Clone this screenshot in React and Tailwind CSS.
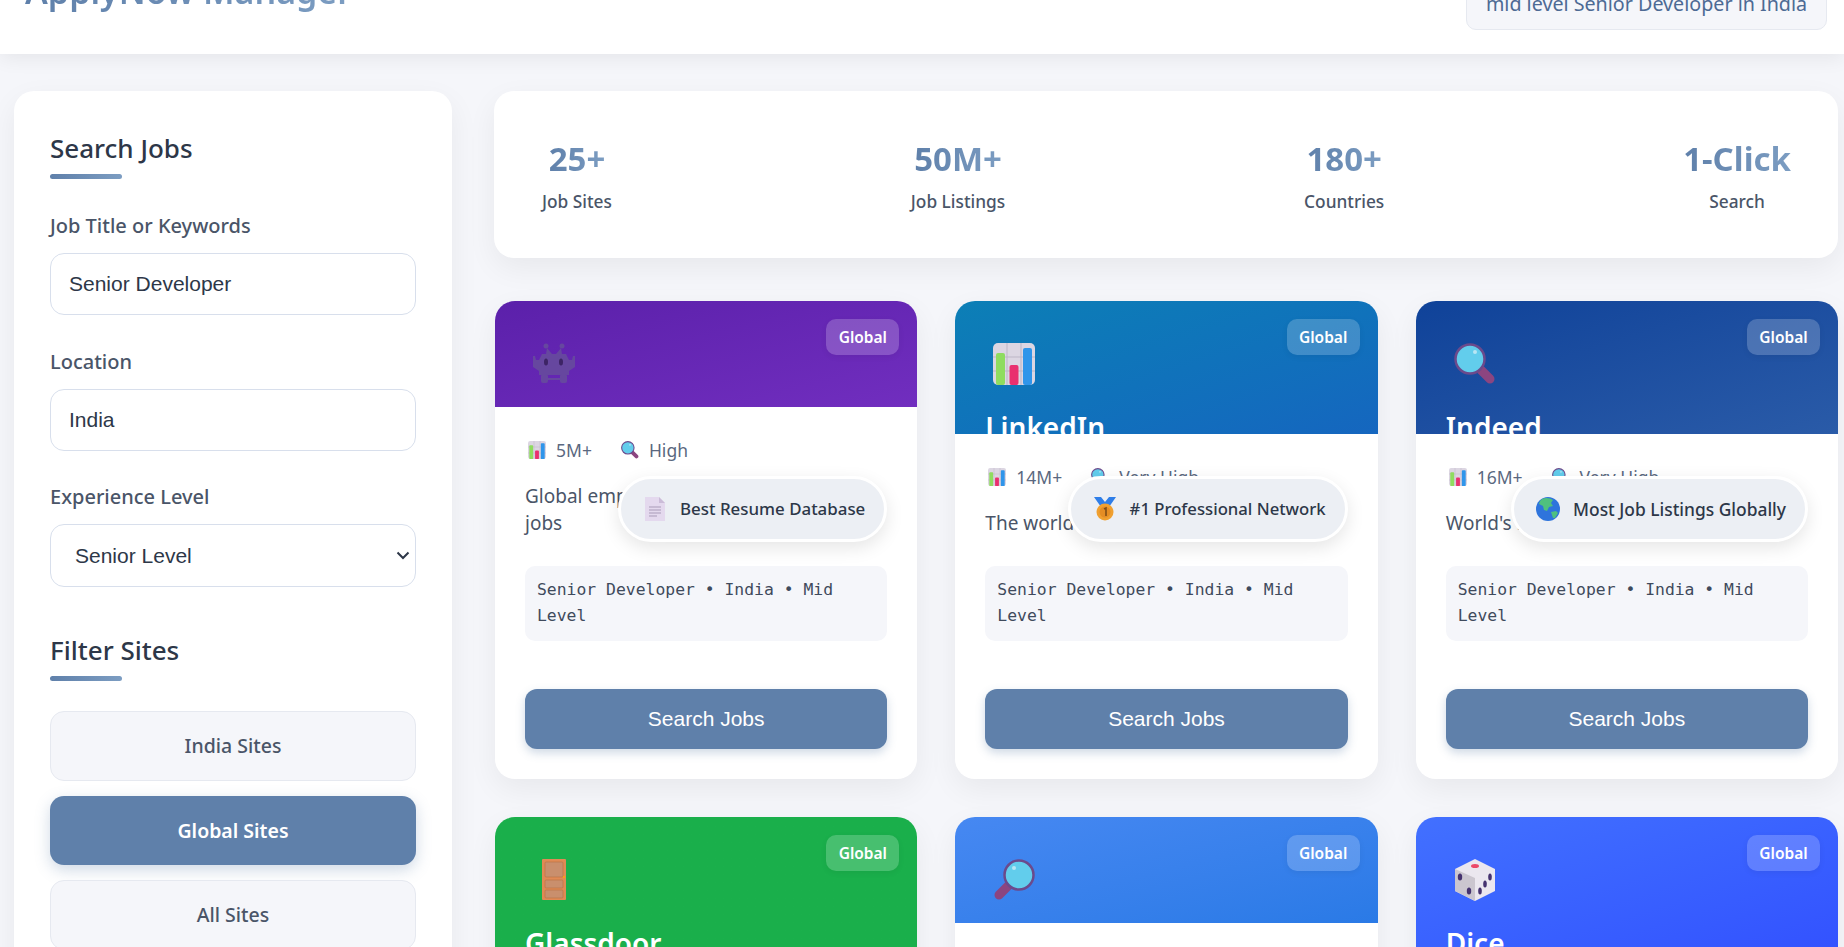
import React from "react";

const sans = "font-['Noto_Sans',sans-serif]";
const arial = "font-['Liberation_Sans',Arial,sans-serif]";

// Emoji have no installed font here, so each is a small inline drawing
const ChartIcon = ({ size = 42 }) => (
  <svg width={size} height={size} viewBox="0 0 42 42">
    <rect width="42" height="42" rx="5" fill="#dcd6e2" />
    <path d="M14 0v42M28 0v42M0 14h42M0 28h42" stroke="#bdb6c6" strokeWidth="1" />
    <rect x="3" y="10" width="9" height="32" rx="2" fill="#8fdc5f" />
    <rect x="16.500" y="22" width="9" height="20" rx="2" fill="#e9306f" />
    <rect x="30" y="5" width="9" height="37" rx="2" fill="#2f95ea" />
  </svg>
);

const SearchIcon = ({ size = 42, flip = false }) => (
  <svg width={size} height={size} viewBox="0 0 42 42" className={flip ? "-scale-x-100" : ""}>
    <path d="M27 27l9 9" stroke="#8c4580" strokeWidth="9" strokeLinecap="round" />
    <circle cx="16" cy="16" r="14.500" fill="#62cdec" stroke="#6b4a8c" strokeWidth="2.500" />
    <circle cx="21" cy="9" r="2" fill="#b8e6f4" />
  </svg>
);

const InvaderIcon = () => (
  <svg width="42" height="42" viewBox="0 0 42 42">
    <g fill="#66479f">
      <circle cx="13" cy="3" r="2.500" />
      <circle cx="29" cy="3" r="2.500" />
      <path d="M14 5l5 6h-6zM28 5l-5 6h6z" />
      <path d="M9 11h24l3 6h3l1-4h2v11l-6 4v4H6v-4l-6-4V13h2l1 4h3z" />
      <rect x="8" y="31" width="7" height="9" rx="2" />
      <rect x="27" y="31" width="7" height="9" rx="2" />
      <rect x="12" y="35" width="18" height="2" />
    </g>
    <ellipse cx="13" cy="19" rx="2" ry="3.500" fill="#3d2465" />
    <ellipse cx="28" cy="19" rx="2" ry="3.500" fill="#3d2465" />
  </svg>
);

const DoorIcon = () => (
  <svg width="42" height="42" viewBox="0 0 42 42">
    <rect x="9" y="0" width="24" height="41" rx="1" fill="#e08a55" />
    <rect x="12" y="3" width="18" height="15" rx="1" fill="#c98f6d" stroke="#b97246" strokeWidth="0.700" />
    <rect x="12" y="21" width="18" height="8" rx="1" fill="#c98f6d" stroke="#b97246" strokeWidth="0.700" />
    <rect x="12" y="31" width="18" height="8" rx="1" fill="#c98f6d" stroke="#b97246" strokeWidth="0.700" />
    <circle cx="31" cy="18" r="1.200" fill="#f7a01e" />
  </svg>
);

const DiceIcon = () => (
  <svg width="42" height="42" viewBox="0 0 42 42">
    <path d="M21 0l20 10v22l-20 10-20-10V10z" fill="#ebe7ef" />
    <path d="M1 10l20 9v23l-20-10z" fill="#cbc6cf" />
    <ellipse cx="21" cy="7" rx="4" ry="2" fill="#ec4a6a" />
    <g fill="#46336f">
      <ellipse cx="6" cy="18" rx="2.200" ry="3.500" />
      <ellipse cx="36" cy="18" rx="1.800" ry="3.500" />
      <ellipse cx="31" cy="25" rx="1.800" ry="3.500" />
      <ellipse cx="15" cy="32" rx="2.200" ry="3.500" />
      <ellipse cx="26" cy="32" rx="1.800" ry="3.500" />
    </g>
  </svg>
);

const PageIcon = () => (
  <svg width="20" height="24" viewBox="0 0 20 24">
    <path d="M0 0h14l6 6v18H0z" fill="#e4d9ee" />
    <path d="M14 0l6 6h-6z" fill="#cbbcd8" />
    <path d="M4 10h12M4 13h12M4 16h12M4 19h8" stroke="#a99bb8" strokeWidth="1" />
  </svg>
);

const MedalIcon = () => (
  <svg width="22" height="24" viewBox="0 0 22 24">
    <path d="M0 0h7l4 5 4-5h7l-7 10H7z" fill="#2f7ee8" />
    <circle cx="11" cy="15" r="8.500" fill="#f0a030" />
    <circle cx="11" cy="15" r="5.500" fill="#e58d24" />
    <path d="M10 12l2-1v8" stroke="#7a4a15" strokeWidth="1.500" fill="none" />
  </svg>
);

const GlobeIcon = () => (
  <svg width="24" height="24" viewBox="0 0 24 24">
    <circle cx="12" cy="12" r="12" fill="#2e74dc" />
    <path d="M6 2c4-2 8-1 11 1l-2 3 2 3-4 1-2 4-3-1-1-4-4-2 1-3zM15 15l5-1 2 2-3 5-2 0z" fill="#4fc07f" />
  </svg>
);

const sites = [
  {
    name: "Monster",
    headerBg: "from-[#5b20aa] to-[#712ebf]",
    headerH: "h-[106px]",
    icon: <InvaderIcon />,
    count: "5M+",
    level: "High",
    desc: "Global employment website with many\njobs",
    PillIcon: PageIcon,
    pill: "Best Resume Database",
    pillText: "text-[16.900px]",
  },
  {
    name: "LinkedIn",
    headerBg: "from-[#0c7fb6] to-[#1566bf]",
    headerH: "h-[133px]",
    icon: <ChartIcon />,
    count: "14M+",
    level: "Very High",
    desc: "The world's largest professional hub",
    PillIcon: MedalIcon,
    pill: "#1 Professional Network",
    pillText: "text-[16.700px]",
  },
  {
    name: "Indeed",
    headerBg: "from-[#0f4299] to-[#2a5ba8]",
    headerH: "h-[133px]",
    icon: <SearchIcon />,
    count: "16M+",
    level: "Very High",
    desc: "World's largest job site with top listings",
    PillIcon: GlobeIcon,
    pill: "Most Job Listings Globally",
    pillText: "text-[17.400px]",
  },
  {
    name: "Glassdoor",
    headerBg: "from-[#1aaf4b] to-[#1aaf4b]",
    headerH: "h-[133px]",
    icon: <DoorIcon />,
  },
  {
    name: "Google Jobs",
    headerBg: "from-[#4688f2] to-[#2a7ae6]",
    headerH: "h-[106px]",
    icon: <SearchIcon flip />,
  },
  {
    name: "Dice",
    headerBg: "from-[#4270ff] to-[#3352ff]",
    headerH: "h-[133px]",
    icon: <DiceIcon />,
  },
];

const SectionTitle = ({ children, className }) => (
  <div className={className}>
    <h2 className="text-[26px] leading-[34px] font-medium text-[#2d3748]">{children}</h2>
    <div className="mt-[9px] w-[72px] h-[5px] rounded-full bg-gradient-to-r from-[#5f80aa] to-[#7c9dc2]"></div>
  </div>
);

const Field = ({ label, children }) => (
  <div className="mb-[32.5px]">
    <label className="block mb-[14px] text-[20px] leading-[27px] font-medium text-[#4a5568]">{label}</label>
    {children}
  </div>
);

const inputCls = `w-full h-[62px] px-[18px] bg-white border border-[#d8dfec] rounded-[14px] text-[21px] text-[#2d3748] ${arial}`;

const FilterButton = ({ label, active }) => (
  <button
    className={
      active
        ? "w-full h-[69.5px] rounded-[14px] bg-[#5f80aa] text-white text-[19.500px] font-semibold shadow-[0_5px_15px_rgba(95,128,170,0.3)]"
        : "w-full h-[69.5px] rounded-[14px] bg-[#f5f6fa] border border-[#e6e9f0] text-[#4a5568] text-[19.500px] font-medium"
    }
  >
    {label}
  </button>
);

const Stat = ({ value, label }) => (
  <div className="flex flex-col items-center">
    <div className="text-[33px] leading-[45px] -mt-[1px] font-bold text-transparent bg-clip-text bg-gradient-to-r from-[#5f80aa] to-[#7c9dc2]">
      {value}
    </div>
    <div className="mt-[10px] text-[17.300px] leading-[22px] font-medium text-[#4a5568]">{label}</div>
  </div>
);

const SiteCard = ({ site }) => (
  <div className="relative h-[478px] flex flex-col bg-white rounded-[20px] shadow-[0_10px_30px_rgba(0,0,0,0.06)]">
    <div className={`relative shrink-0 overflow-hidden rounded-t-[20px] bg-gradient-to-br px-[30px] pt-[42px] ${site.headerBg} ${site.headerH}`}>
      <div className="absolute top-[18px] right-[18px] w-[73px] h-[36px] pt-[1px] flex items-center justify-center rounded-[10px] bg-white/20 text-white text-[15.500px] font-semibold shadow-[0_2px_6px_rgba(0,0,0,0.06)]">
        Global
      </div>
      <div className="pl-[8px] h-[42px]">{site.icon}</div>
      {site.headerH === "h-[133px]" && (
        <div className="mt-[23px] text-[28px] leading-[38px] font-semibold text-white">{site.name}</div>
      )}
    </div>
    {site.pill && (
      <div className="flex-1 flex flex-col px-[30px] pb-[30px] pt-[32px]">
        <div className="flex items-center gap-[29px] text-[17.500px] leading-[22px] text-[#5a6880]">
          <span className="flex items-center gap-[10px] pl-[3px]">
            <ChartIcon size={18} />
            {site.count}
          </span>
          <span className="flex items-center gap-[10px]">
            <SearchIcon size={18} />
            {site.level}
          </span>
        </div>
        <p className="mt-[22px] text-[19px] leading-[27px] text-[#4a5568] whitespace-pre-line">{site.desc}</p>
        <div className="mt-auto">
          <div className="h-[75px] px-[12px] py-[11px] bg-[#f5f6fa] rounded-[10px] font-['DejaVu_Sans_Mono',monospace] text-[16.400px] leading-[26px] text-[#3f4a5c]">
            Senior Developer • India • Mid Level
          </div>
          <button className={`mt-[48px] w-full h-[60px] rounded-[12px] bg-[#5f80aa] text-white text-[21px] shadow-[0_4px_10px_rgba(95,128,170,0.3)] ${arial}`}>
            Search Jobs
          </button>
        </div>
      </div>
    )}
    {site.pill && (
      <div className={`absolute top-[175px] right-[30px] h-[66px] flex items-center gap-[13px] pl-[22px] pr-[19px] rounded-full bg-[#eceff4] border-[3px] border-white font-medium text-[#2d3748] shadow-[0_6px_18px_rgba(0,0,0,0.1)] ${site.pillText}`}>
        <span className="w-[24px] flex justify-center">
          <site.PillIcon />
        </span>
        {site.pill}
      </div>
    )}
  </div>
);

export default function App() {
  return (
    <div className={`h-[947px] overflow-hidden bg-[#f5f6fa] ${sans}`}>
      <header className="relative z-10 h-[54px] flex items-end justify-between pl-[25px] pr-[17px] bg-white shadow-[0_4px_20px_rgba(0,0,0,0.07)]">
        <h1 className="mb-[39px] text-[34px] leading-[48px] font-semibold text-transparent bg-clip-text bg-gradient-to-r from-[#5f80aa] to-[#7c9dc2]">
          ApplyNow Manager
        </h1>
        <div className="mb-[24px] w-[361px] pt-[30px] pb-[13px] text-center bg-[#f5f6fa] border border-[#e6e9f0] rounded-[10px] text-[19.700px] leading-[24px] text-[#4d6a94] whitespace-nowrap">
          mid level Senior Developer in India
        </div>
      </header>

      <div className="flex gap-[42px] pl-[14px] pr-[6px] pt-[37px]">
        <aside className="w-[438px] shrink-0 self-start px-[36px] pt-[40px] pb-[36px] bg-white rounded-[20px] shadow-[0_10px_30px_rgba(0,0,0,0.06)]">
          <SectionTitle className="mb-[33px]">Search Jobs</SectionTitle>
          <Field label="Job Title or Keywords">
            <input className={inputCls} defaultValue="Senior Developer" />
          </Field>
          <Field label="Location">
            <input className={inputCls} defaultValue="India" />
          </Field>
          <Field label="Experience Level">
            <div className="relative">
              <select className={`${inputCls} h-[63px] appearance-none pl-[24px]`} defaultValue="Senior Level">
                <option>Senior Level</option>
              </select>
              <svg className="absolute right-[6px] top-[24px] text-[#2d3748]" width="14" height="14" viewBox="0 0 14 14" fill="none">
                <path d="M1.500 4.500L7 10l5.500-5.500" stroke="currentColor" strokeWidth="2" />
              </svg>
            </div>
          </Field>

          <SectionTitle className="mt-[46px] mb-[30px]">Filter Sites</SectionTitle>
          <div className="flex flex-col gap-[15px]">
            <FilterButton label="India Sites" />
            <FilterButton label="Global Sites" active />
            <FilterButton label="All Sites" />
          </div>
        </aside>

        <main className="flex-1 min-w-0">
          <div className="h-[167px] flex items-center justify-between pl-[48px] pr-[47px] bg-white rounded-[20px] shadow-[0_10px_30px_rgba(0,0,0,0.06)]">
            <Stat value="25+" label="Job Sites" />
            <Stat value="50M+" label="Job Listings" />
            <Stat value="180+" label="Countries" />
            <Stat value="1-Click" label="Search" />
          </div>
          <div className="mt-[43px] pl-[1px] grid grid-cols-3 gap-[38px]">
            {sites.map((site) => (
              <SiteCard key={site.name} site={site} />
            ))}
          </div>
        </main>
      </div>
    </div>
  );
}
